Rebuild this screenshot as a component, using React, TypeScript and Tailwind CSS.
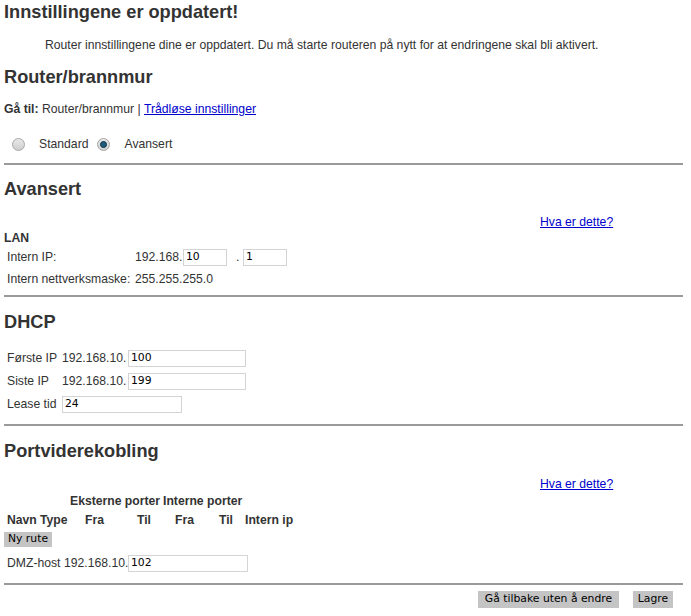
const font = "font-['Liberation_Sans',Arial,sans-serif]";
const verdana = "font-['DejaVu_Sans',Verdana,sans-serif]";

const Heading = ({ children, className = "" }: { children: React.ReactNode; className?: string }) => (
  <h2 className={`h-[24px] flex items-center text-[18.2px] font-bold text-[#333] leading-none ${className}`}>{children}</h2>
);

const Field = ({ value, w }: { value: string; w: string }) => (
  <span
    className={`${w} h-[17px] border border-[#d4d4d4] bg-white flex items-center px-[2px] text-[10.8px] ${verdana} text-black`}
  >
    {value}
  </span>
);

const Radio = ({ checked }: { checked?: boolean }) => (
  <span className="w-[13px] h-[13px] rounded-full border border-[#a6a6a6] bg-gradient-to-b from-[#e8e8e8] to-[#cfcfcf] flex items-center justify-center">
    {checked && <span className="w-[7px] h-[7px] rounded-full bg-[#1e5a7a] border border-[#0f3550]" />}
  </span>
);

const Hr = ({ className = "" }: { className?: string }) => (
  <div className={`h-[2px] w-[679px] bg-[#9a9a9a] ${className}`} />
);

const Link = ({ children }: { children: React.ReactNode }) => (
  <a className="text-[#0000cc] underline cursor-pointer">{children}</a>
);

const btn = `h-[17px] bg-[#c4c4c4] text-[10.8px] ${verdana} text-black flex items-center justify-center`;

export default function App() {
  return (
    <div className={`${font} text-[12.2px] text-[#333] bg-white w-[691px] h-[616px] pl-[4px] flex flex-col`}>
      <Heading>Innstillingene er oppdatert!</Heading>
      <p className="mt-[13px] h-[16px] flex items-center pl-[41px]">
        Router innstillingene dine er oppdatert. Du må starte routeren på nytt for at endringene skal bli aktivert.
      </p>
      <Heading className="mt-[12px]">Router/brannmur</Heading>
      <div className="mt-[12px] h-[16px] flex items-center">
        <b>Gå til:</b>&nbsp;Router/brannmur |&nbsp;<Link>Trådløse innstillinger</Link>
      </div>
      <div className="mt-[19px] h-[16px] flex items-center">
        <span className="ml-[8px]"><Radio /></span>
        <span className="ml-[14px]">Standard</span>
        <span className="ml-[9px]"><Radio checked /></span>
        <span className="ml-[14px]">Avansert</span>
      </div>
      <Hr className="mt-[11px]" />

      <Heading className="mt-[12px]">Avansert</Heading>
      <div className="mt-[13px] h-[16px] flex items-center pl-[536px]">
        <Link>Hva er dette?</Link>
      </div>
      <div className="h-[16px] flex items-center font-bold">LAN</div>
      <div className="mt-[2px] h-[18px] flex items-center pl-[3px]">
        <span className="w-[128px]">Intern IP:</span>
        <span className="w-[48px]">192.168.</span>
        <Field value="10" w="w-[44px]" />
        <span className="ml-[9px] w-[7px]">.</span>
        <Field value="1" w="w-[44px]" />
      </div>
      <div className="mt-[5px] h-[16px] flex items-center pl-[3px]">
        <span className="w-[128px]">Intern nettverksmaske:</span>
        <span>255.255.255.0</span>
      </div>
      <Hr className="mt-[8px]" />

      <Heading className="mt-[13px]">DHCP</Heading>
      <div className="mt-[16px] h-[17px] flex items-center pl-[3px]">
        <span className="w-[55px]">Første IP</span>
        <span className="w-[66px]">192.168.10.</span>
        <Field value="100" w="w-[118px]" />
      </div>
      <div className="mt-[6px] h-[17px] flex items-center pl-[3px]">
        <span className="w-[55px]">Siste IP</span>
        <span className="w-[66px]">192.168.10.</span>
        <Field value="199" w="w-[118px]" />
      </div>
      <div className="mt-[6px] h-[17px] flex items-center pl-[3px]">
        <span className="w-[55px]">Lease tid</span>
        <Field value="24" w="w-[120px]" />
      </div>
      <Hr className="mt-[11px]" />

      <Heading className="mt-[13px]">Portviderekobling</Heading>
      <div className="mt-[13px] h-[16px] flex items-center pl-[536px]">
        <Link>Hva er dette?</Link>
      </div>
      <div className="mt-[1px] h-[16px] flex items-center font-bold pl-[66px]">
        <span className="w-[93px]">Eksterne porter</span>
        <span>Interne porter</span>
      </div>
      <div className="mt-[3px] h-[16px] flex items-center font-bold pl-[3px]">
        <span className="w-[33px]">Navn</span>
        <span className="w-[45px]">Type</span>
        <span className="w-[52px]">Fra</span>
        <span className="w-[38px]">Til</span>
        <span className="w-[44px]">Fra</span>
        <span className="w-[26px]">Til</span>
        <span>Intern ip</span>
      </div>
      <div className="mt-[4px] h-[15px] flex">
        <button className={`w-[48px] h-[15px] bg-[#c4c4c4] text-[10.8px] ${verdana} text-black flex items-center justify-center`}>
          Ny rute
        </button>
      </div>
      <div className="mt-[8px] h-[17px] flex items-center pl-[3px]">
        <span className="w-[57px]">DMZ-host</span>
        <span className="w-[64px]">192.168.10.</span>
        <Field value="102" w="w-[120px]" />
      </div>
      <Hr className="mt-[11px]" />
      <div className="mt-[6px] w-[679px] flex justify-end gap-[14px] pr-[10px]">
        <button className={`w-[141px] ${btn}`}>Gå tilbake uten å endre</button>
        <button className={`w-[40px] ${btn}`}>Lagre</button>
      </div>
    </div>
  );
}
